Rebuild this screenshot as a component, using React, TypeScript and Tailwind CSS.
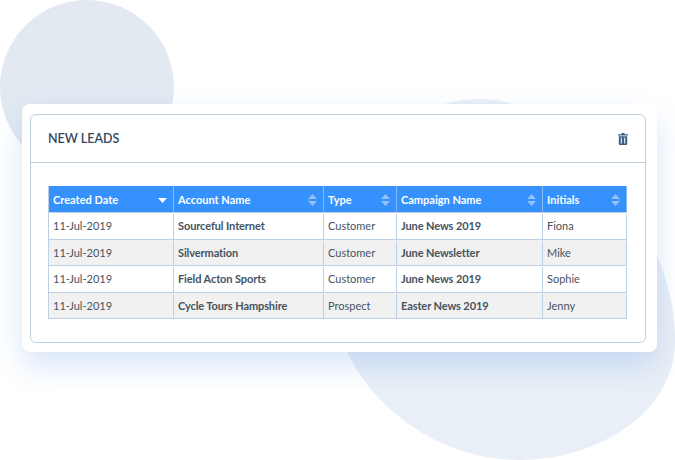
const COLS = ["w-[125px]", "w-[150px]", "w-[73px]", "w-[146px]", "w-[84px]"];

const ROWS = [
  { date: "11-Jul-2019", account: "Sourceful Internet", type: "Customer", campaign: "June News 2019", initials: "Fiona" },
  { date: "11-Jul-2019", account: "Silvermation", type: "Customer", campaign: "June Newsletter", initials: "Mike" },
  { date: "11-Jul-2019", account: "Field Acton Sports", type: "Customer", campaign: "June News 2019", initials: "Sophie" },
  { date: "11-Jul-2019", account: "Cycle Tours Hampshire", type: "Prospect", campaign: "Easter News 2019", initials: "Jenny" },
];

const HEADERS = ["Created Date", "Account Name", "Type", "Campaign Name", "Initials"];

function SortIcon({ active }: { active: boolean }) {
  if (active) {
    return (
      <svg width="9" height="5" viewBox="0 0 9 5" className="fill-white">
        <path d="M0 0h9L4.5 5z" />
      </svg>
    );
  }
  return (
    <svg width="9" height="12" viewBox="0 0 9 12" className="fill-[#93c0f5]">
      <path d="M4.5 0L9 5H0zM0 7h9l-4.5 5z" />
    </svg>
  );
}

function TrashIcon() {
  return (
    <svg width="10" height="12" viewBox="0 0 10 12" className="text-[#3a5f85]">
      <path d="M3.5 0h3v1.2H10v1.3H0V1.2h3.5z" fill="currentColor" />
      <path
        d="M.8 3.2h8.4V11a1 1 0 0 1-1 1H1.8a1 1 0 0 1-1-1zM2.8 4.5v6h1v-6zm3.4 0v6h1v-6z"
        fill="currentColor"
        fillRule="evenodd"
      />
    </svg>
  );
}

// background blob, it isn't a true circle in the picture
function Blob() {
  return (
    <svg width="675" height="460" viewBox="0 0 675 460" className="absolute left-0 top-0 fill-[#e9eff6]">
      <path d="M480 99C560 99 625 190 657 255C670 285 676 320 675 345C672 415 595 460 520 460C440 460 375 410 347 352C325 300 340 99 480 99z" />
    </svg>
  );
}

export default function App() {
  return (
    <div className="relative h-[460px] w-[675px] overflow-hidden bg-white font-['Lato',sans-serif]">
      <div className="absolute left-0 top-0 h-[174px] w-[174px] rounded-full bg-[#e2e9f1]" />
      <Blob />

      <div className="relative ml-[22px] mt-[104px] w-[635px] rounded-lg bg-white pb-[9px] pl-2 pr-[11px] pt-[10px] shadow-[0_14px_30px_rgba(60,130,225,0.2)]">
        <div className="rounded-md border border-[#bdd0e0] bg-white">
          <div className="flex h-[48px] items-center justify-between border-b border-[#bdd0e0] pl-[17px] pr-[17px]">
            <h2 className="pt-[2px] text-[12.5px] font-semibold text-[#34495e]">NEW LEADS</h2>
            <TrashIcon />
          </div>
          <div className="px-[17px] pb-[23px] pt-[23px]">
            <div className="w-[579px] border-b border-l border-[#bfd0e2] text-[11px]">
              <div className="flex h-[26px] bg-[#3491fd] font-bold text-white">
                {HEADERS.map((h, i) => (
                  <div
                    key={h}
                    className={`${COLS[i]} flex items-center justify-between border-r border-[#86b9f3] pl-[4px] pr-[6px] pt-[2px]`}
                  >
                    <span>{h}</span>
                    <SortIcon active={i === 0} />
                  </div>
                ))}
              </div>
              {ROWS.map((r, idx) => (
                <div
                  key={r.account}
                  className={`flex h-[26.5px] border-t border-[#bfd0e2] pt-px text-[#46535f] ${idx % 2 ? "bg-[#f1f1f1]" : "bg-white"}`}
                >
                  <div className={`${COLS[0]} flex items-center border-r border-[#bfd0e2] pl-[4px]`}>{r.date}</div>
                  <div className={`${COLS[1]} flex items-center border-r border-[#bfd0e2] pl-[4px] font-bold tracking-[-0.1px]`}>{r.account}</div>
                  <div className={`${COLS[2]} flex items-center border-r border-[#bfd0e2] pl-[4px]`}>{r.type}</div>
                  <div className={`${COLS[3]} flex items-center border-r border-[#bfd0e2] pl-[4px] font-bold tracking-[-0.1px]`}>{r.campaign}</div>
                  <div className={`${COLS[4]} flex items-center border-r border-[#bfd0e2] pl-[4px]`}>{r.initials}</div>
                </div>
              ))}
            </div>
          </div>
        </div>
      </div>
    </div>
  );
}
